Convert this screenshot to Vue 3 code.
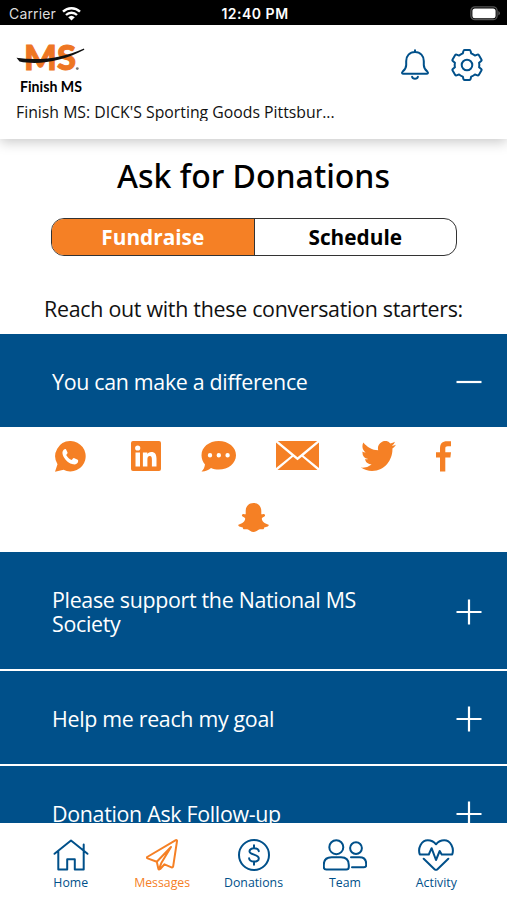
<template>
  <div class="screen">
    <div class="status-bar">
      <div class="carrier">
        <span>Carrier</span>
        <svg width="19" height="14" viewBox="0 0 19 14">
          <g fill="none" stroke="#fff" stroke-width="2.4">
            <path d="M1 4.7A12.2 12.2 0 0 1 18 4.7" />
            <path d="M4 8A8 8 0 0 1 15 8" />
          </g>
          <path d="M6.2 10.2A4.8 4.8 0 0 1 12.8 10.2L9.5 13.6Z" fill="#fff" />
        </svg>
      </div>
      <span class="time">12:40 PM</span>
      <svg class="battery" width="31" height="15" viewBox="0 0 31 15">
        <rect x="0.9" y="0.9" width="26.2" height="12.8" rx="4" fill="none" stroke="#555" stroke-width="1.3" />
        <rect x="2.4" y="2.4" width="23.2" height="9.8" rx="2.5" fill="#fff" />
        <path d="M28.3 5Q30 5.8 30 7.3T28.3 9.6Z" fill="#555" />
      </svg>
    </div>

    <header class="header">
      <div class="header-top">
        <svg class="logo" width="70" height="56" viewBox="0 0 70 56">
          <text x="8" y="31" class="logo-ms" textLength="52" lengthAdjust="spacingAndGlyphs">MS</text>
          <path d="M.5 18.8C23 22 46 19.5 68 9.5L68.3 10.8C47 22 23 26.5 3.5 22.5Z" fill="#111" />
          <circle cx="61.3" cy="29.6" r="1.4" fill="#777" />
          <text x="4" y="52.5" class="logo-name" textLength="62" lengthAdjust="spacingAndGlyphs">Finish MS</text>
        </svg>
        <div class="header-icons">
          <svg width="28" height="32" viewBox="0 0 28 32">
            <g class="line">
              <path d="M14 3C8.5 3 5.2 7 5.2 12V16C5.2 19 3.8 20.8 1.7 22.6C.5 23.8 1 24.8 2.5 24.8H25.5C27 24.8 27.5 23.8 26.3 22.6C24.2 20.8 22.8 19 22.8 16V12C22.8 7 19.5 3 14 3ZM14 3V1.2" />
              <path d="M11.1 27.8C11.8 30.5 16.2 30.5 16.9 27.8" />
            </g>
          </svg>
          <svg width="32" height="32" viewBox="-16 -16 32 32">
            <g class="line">
              <path d="M-4.2-11.6L-3.6-14Q-3.4-14.9-2.5-14.9H2.5Q3.4-14.9 3.6-14L4.2-11.6Q6.2-10.8 7.9-9.4L10.4-10.4Q11.3-10.7 11.8-9.9L14.4-5.5Q14.9-4.6 14.2-4L12.1-2.2Q12.5 0 12.1 2.2L14.2 4Q14.9 4.6 14.4 5.5L11.8 9.9Q11.3 10.7 10.4 10.4L7.9 9.4Q6.2 10.8 4.2 11.6L3.6 14Q3.4 14.9 2.5 14.9H-2.5Q-3.4 14.9-3.6 14L-4.2 11.6Q-6.2 10.8-7.9 9.4L-10.4 10.4Q-11.3 10.7-11.8 9.9L-14.4 5.5Q-14.9 4.6-14.2 4L-12.1 2.2Q-12.5 0-12.1-2.2L-14.2-4Q-14.9-4.6-14.4-5.5L-11.8-9.9Q-11.3-10.7-10.4-10.4L-7.9-9.4Q-6.2-10.8-4.2-11.6Z" />
              <circle r="5.3" />
            </g>
          </svg>
        </div>
      </div>
      <p class="event-name">Finish MS: DICK'S Sporting Goods Pittsbur...</p>
    </header>

    <main class="content">
      <h1>Ask for Donations</h1>

      <div class="tabs">
        <button :class="{ active: tab === 'fundraise' }" @click="tab = 'fundraise'">Fundraise</button>
        <button :class="{ active: tab === 'schedule' }" @click="tab = 'schedule'">Schedule</button>
      </div>

      <p class="intro">Reach out with these conversation starters:</p>

      <section v-for="(item, i) in starters" :key="item.title" class="starter">
        <button class="starter-head" @click="toggle(i)">
          <span class="starter-title">{{ item.title }}</span>
          <svg width="26" height="26" viewBox="0 0 26 26">
            <path :d="open === i ? 'M.5 13H25.5' : 'M.5 13H25.5M13 .5V25.5'" stroke="#fff" stroke-width="2.2" />
          </svg>
        </button>
        <div v-if="open === i" class="share">
          <svg
            v-for="icon in shareIcons"
            :key="icon.name"
            :class="icon.name"
            :width="icon.w"
            :height="icon.h"
            :viewBox="icon.box"
            preserveAspectRatio="none"
          >
            <path :d="icon.path" fill="#f58025" fill-rule="evenodd" />
          </svg>
        </div>
      </section>
    </main>

    <nav class="bottom-nav">
      <a v-for="link in links" :key="link.label" :class="{ active: link.label === 'Messages' }">
        <svg :width="link.w" height="32" :viewBox="`0 0 ${link.w} 32`">
          <path class="line" :d="link.path" />
        </svg>
        <span>{{ link.label }}</span>
      </a>
    </nav>
  </div>
</template>

<script setup>
import { ref } from "vue";

const tab = ref("fundraise");
const open = ref(0);

const starters = [
  { title: "You can make a difference" },
  { title: "Please support the National MS Society" },
  { title: "Help me reach my goal" },
  { title: "Donation Ask Follow-up" }
];

const toggle = (i) => {
  open.value = open.value === i ? -1 : i;
};

const shareIcons = [
  {
    name: "whatsapp",
    w: 31,
    h: 31,
    box: "0 0 31 31",
    path: "M15.8 0A15.2 15.2 0 1 1 8.5 28.7L0 30.8L2.5 23.2A15.2 15.2 0 0 1 15.8 0ZM8.7 8.7C6.8 10.5 7.2 13.6 9 16.4C11.2 19.8 14.2 22.4 18 23.3C20.4 23.9 23.1 22.6 23.2 20C23.2 19.2 22.9 18.9 22.2 18.5L19.4 17.2C18.7 16.9 18.3 17.1 17.9 17.6L16.8 19C14.2 18.1 12.3 16.3 11.2 14L12.3 12.6C12.6 12.2 12.6 11.8 12.4 11.3L11.1 8.5C10.7 7.7 9.5 7.9 8.7 8.7Z"
  },
  {
    name: "linkedin",
    w: 30,
    h: 30,
    box: "0 0 30 30",
    path: "M2 0H28Q30 0 30 2V28Q30 30 28 30H2Q0 30 0 28V2Q0 0 2 0ZM4.5 11.4V25.4H9V11.4ZM6.7 4.4A2.6 2.6 0 1 0 6.7 9.6A2.6 2.6 0 1 0 6.7 4.4ZM11.9 11.4V25.4H16.4V18.5C16.4 16.5 17 15.1 18.8 15.1C20.6 15.1 20.9 16.7 20.9 18.7V25.4H25.5V17.7C25.5 13.6 24.2 11 20.2 11C18.2 11 16.9 12 16.3 13.2V11.4Z"
  },
  {
    name: "message",
    w: 35,
    h: 31,
    box: "0 0 35 31",
    path: "M17.7 0C27.4 0 35 6.2 35 14.2S27.4 28.5 17.7 28.5C15 28.5 12.3 28 10 27C7.2 29.4 3.7 30.8 .5 30.5C2.5 28.8 3.6 26.5 4 23.5C1.8 21 .5 17.8 .5 14.2C.5 6.2 8 0 17.7 0ZM9 12A2.2 2.2 0 1 0 9 16.4A2.2 2.2 0 1 0 9 12ZM17.8 12A2.2 2.2 0 1 0 17.8 16.4A2.2 2.2 0 1 0 17.8 12ZM26.6 12A2.2 2.2 0 1 0 26.6 16.4A2.2 2.2 0 1 0 26.6 12Z"
  },
  {
    name: "mail",
    w: 43,
    h: 29,
    box: "0 0 43 29",
    path: "M1.8 0H41.2L21.5 16.3ZM0 1.6L15.5 14.5L0 27ZM43 1.6V27L27.5 14.5ZM17.1 15.8L21.5 19.3L25.9 15.8L41.5 29H1.5Z"
  },
  {
    name: "twitter",
    w: 35,
    h: 30,
    box: "0 2.2 24 19.6",
    path: "M23.953 4.57a10 10 0 0 1-2.825.775 4.958 4.958 0 0 0 2.163-2.723c-.951.555-2.005.959-3.127 1.184a4.92 4.92 0 0 0-8.384 4.482C7.69 8.095 4.067 6.13 1.64 3.162a4.822 4.822 0 0 0-.666 2.475c0 1.71.87 3.213 2.188 4.096a4.904 4.904 0 0 1-2.228-.616v.06a4.923 4.923 0 0 0 3.946 4.827 4.996 4.996 0 0 1-2.212.085 4.936 4.936 0 0 0 4.604 3.417 9.867 9.867 0 0 1-6.102 2.105c-.39 0-.779-.023-1.17-.067a13.995 13.995 0 0 0 7.557 2.209c9.053 0 13.998-7.496 13.998-13.985 0-.21 0-.42-.015-.63A9.935 9.935 0 0 0 24 4.59z"
  },
  {
    name: "facebook",
    w: 15,
    h: 31,
    box: "0 0 15 31",
    path: "M4 30.5V16.5H0V11.3H4V7.8C4 2.5 6.3 .3 11 .3H15V5.3H11.8C9.9 5.3 9.3 6 9.3 7.8V11.3H15L14.4 16.5H9.3V30.5Z"
  },
  {
    name: "snapchat",
    w: 31,
    h: 29,
    box: "0 0 31 29",
    path: "M15.5 0C20.2 0 23.3 3.3 23.3 8V11.2C24.2 11.4 24.8 10.8 25.7 10.9C27 11.1 27.5 12.2 26.7 13.2C26 14.2 24.1 14.2 23.8 15.4C23.7 18.6 26.8 20.5 30 21.5C31.2 21.9 30.9 22.8 29.8 23.4C28.7 24 27.2 23.8 26.5 24.3C26 24.7 26.3 25.9 25.4 26.2C24.2 26.5 22.9 25.8 21 26.5C19.1 27.2 18.1 29 15.5 29S11.9 27.2 10 26.5C8.1 25.8 6.8 26.5 5.6 26.2C4.7 25.9 5 24.7 4.5 24.3C3.8 23.8 2.3 24 1.2 23.4C.1 22.8-.2 21.9 1 21.5C4.2 20.5 7.3 18.6 7.2 15.4C6.9 14.2 5 14.2 4.3 13.2C3.5 12.2 4 11.1 5.3 10.9C6.2 10.8 6.8 11.4 7.7 11.2V8C7.7 3.3 10.8 0 15.5 0Z"
  }
];

const links = [
  {
    label: "Home",
    w: 36,
    path: "M1.5 14.8L18 1.5L34.5 14.8M5.3 12V30.4H14.2V20.2H21.8V30.4H30.7V12M30.7 11.5V5.5"
  },
  {
    label: "Messages",
    w: 32,
    path: "M1.2 18L29.8 1.2Q31.2.8 31 2.2L27.2 27.2Q27 28.8 25.5 28.3L18.5 25.3L14.2 30Q12.6 31.2 12.3 29.6L10.8 22.8L1.6 19.4Q.4 18.7 1.2 18ZM10.8 22.8L25 8L15.3 24.1L13 30"
  },
  {
    label: "Donations",
    w: 32,
    path: "M16 1A15 15 0 1 1 16 31A15 15 0 1 1 16 1ZM20.8 12.2C20.3 8.4 11.5 8.2 11.5 12.3C11.5 16.5 20.8 14.8 20.8 19.4C20.8 23.8 11.4 23.5 11.1 19.3M16 6.2V9.2M16 22.6V25.8"
  },
  {
    label: "Team",
    w: 44,
    path: "M13.3 1.2A7 7 0 1 1 13.3 15.2A7 7 0 1 1 13.3 1.2ZM3.3 30.5Q.8 30.5.8 28V26Q.8 18.3 8.5 18.3H18Q25.8 18.3 25.8 26V28Q25.8 30.5 23.3 30.5ZM33 3.2A5.9 5.9 0 1 1 33 15A5.9 5.9 0 1 1 33 3.2ZM28 18.3H36.5Q43.2 18.3 43.2 25V26Q43.2 28.2 41 28.2H29"
  },
  {
    label: "Activity",
    w: 36,
    path: "M1.8 15.5H10.8L13.6 9.2L18 21L21.7 12L23.7 15.5H34.2C36.5 9 32.5 1.2 26.2 1.2C22.5 1.2 20 2.8 18 5.3C16 2.8 13.5 1.2 9.8 1.2C3.5 1.2-.5 9 1.8 15.5ZM5.7 19.7L16.5 30.2Q18 31.4 19.5 30.2L30.3 19.7"
  }
];
</script>

<style>
body {
  margin: 0;
  background: #fff;
}
</style>

<style scoped>
.screen {
  width: 507px;
  height: 900px;
  display: flex;
  flex-direction: column;
  overflow: hidden;
  background: #fff;
  color: #111;
  font-family: "Open Sans", sans-serif;
}
p,
h1 {
  margin: 0;
  white-space: nowrap;
}
svg {
  display: block;
  flex-shrink: 0;
}
button {
  border: none;
  padding: 0;
  background: none;
  font-family: inherit;
  cursor: pointer;
}
.line {
  fill: none;
  stroke: #00508a;
  stroke-width: 2;
  stroke-linecap: round;
  stroke-linejoin: round;
}

/* Status bar */
.status-bar {
  height: 25px;
  flex-shrink: 0;
  display: grid;
  grid-template-columns: 1fr auto 1fr;
  align-items: center;
  padding: 2px 6px 0 9px;
  box-sizing: border-box;
  background: #000;
  color: #fff;
  font-family: Inter, sans-serif;
  font-size: 14px;
}
.carrier {
  display: flex;
  align-items: center;
  gap: 6px;
  color: #ddd;
}
.carrier span {
  letter-spacing: 0.15px;
}
.time {
  font-weight: 600;
  letter-spacing: 0.5px;
}
.battery {
  justify-self: end;
}

/* Header */
.header {
  height: 114px;
  flex-shrink: 0;
  box-sizing: border-box;
  padding: 14px 24px 0 16px;
  background: #fff;
  box-shadow: 0 3px 12px rgba(0, 0, 0, 0.22);
  z-index: 1;
}
.header-top {
  display: flex;
  justify-content: space-between;
}
.header-icons {
  display: flex;
  gap: 22px;
  padding-top: 10px;
}
.logo-ms {
  font: 900 35px Lato, sans-serif;
  fill: #ee7623;
  stroke: #ee7623;
  stroke-width: 1;
}
.logo-name {
  font: 700 14.5px Lato, sans-serif;
  fill: #000;
}
.event-name {
  height: 20px;
  margin-top: 6px;
  overflow: hidden;
  font-size: 15.8px;
  line-height: 23px;
}

/* Content */
.content {
  flex: 1;
  min-height: 0;
  overflow: hidden;
}
h1 {
  margin-top: 15px;
  font-family: "Noto Sans", sans-serif;
  font-size: 32px;
  font-weight: 500;
  line-height: 43px;
  text-align: center;
  color: #000;
}
.tabs {
  display: flex;
  width: 406px;
  height: 38px;
  margin: 21px auto 0 51px;
  box-sizing: border-box;
  border: 1.5px solid #333;
  border-radius: 13px;
  overflow: hidden;
}
.tabs button {
  flex: 1;
  font-size: 20.8px;
  font-weight: 700;
  color: #000;
}
.tabs button + button {
  border-left: 1px solid #333;
}
.tabs button.active {
  background: #f58025;
  color: #fff;
}
.intro {
  margin: 38px 0 11px;
  font-size: 21.4px;
  line-height: 29px;
  letter-spacing: -0.28px;
  text-align: center;
}
.starter + .starter {
  border-top: 2px solid #fff;
}
.starter-head {
  display: flex;
  align-items: center;
  justify-content: space-between;
  width: 100%;
  min-height: 93px;
  padding: 2px 25px 0 52px;
  box-sizing: border-box;
  background: #00508a;
  color: #fff;
  font-size: 21.4px;
  line-height: 24px;
  letter-spacing: -0.31px;
  text-align: left;
}
.starter:nth-of-type(2) .starter-head {
  min-height: 117px;
}
.starter-title {
  max-width: 330px;
}
.share {
  display: flex;
  flex-wrap: wrap;
  align-content: flex-start;
  justify-content: center;
  gap: 31px 40px;
  height: 109px;
  padding: 14px 51px 0 49px;
}
.whatsapp {
  margin-right: 5px;
}
.mail {
  margin-right: 2px;
}
.snapchat {
  margin-left: 1px;
}

/* Bottom navigation */
.bottom-nav {
  display: flex;
  flex-shrink: 0;
  height: 77px;
  box-sizing: border-box;
  padding: 16px 25px 0;
  background: #fff;
}
.bottom-nav a {
  flex: 1;
  display: flex;
  flex-direction: column;
  align-items: center;
  gap: 3px;
  color: #00508a;
  font-size: 12.3px;
  line-height: 17px;
}
.bottom-nav a.active {
  color: #f58025;
}
.bottom-nav a.active .line {
  stroke: #f58025;
}
</style>
